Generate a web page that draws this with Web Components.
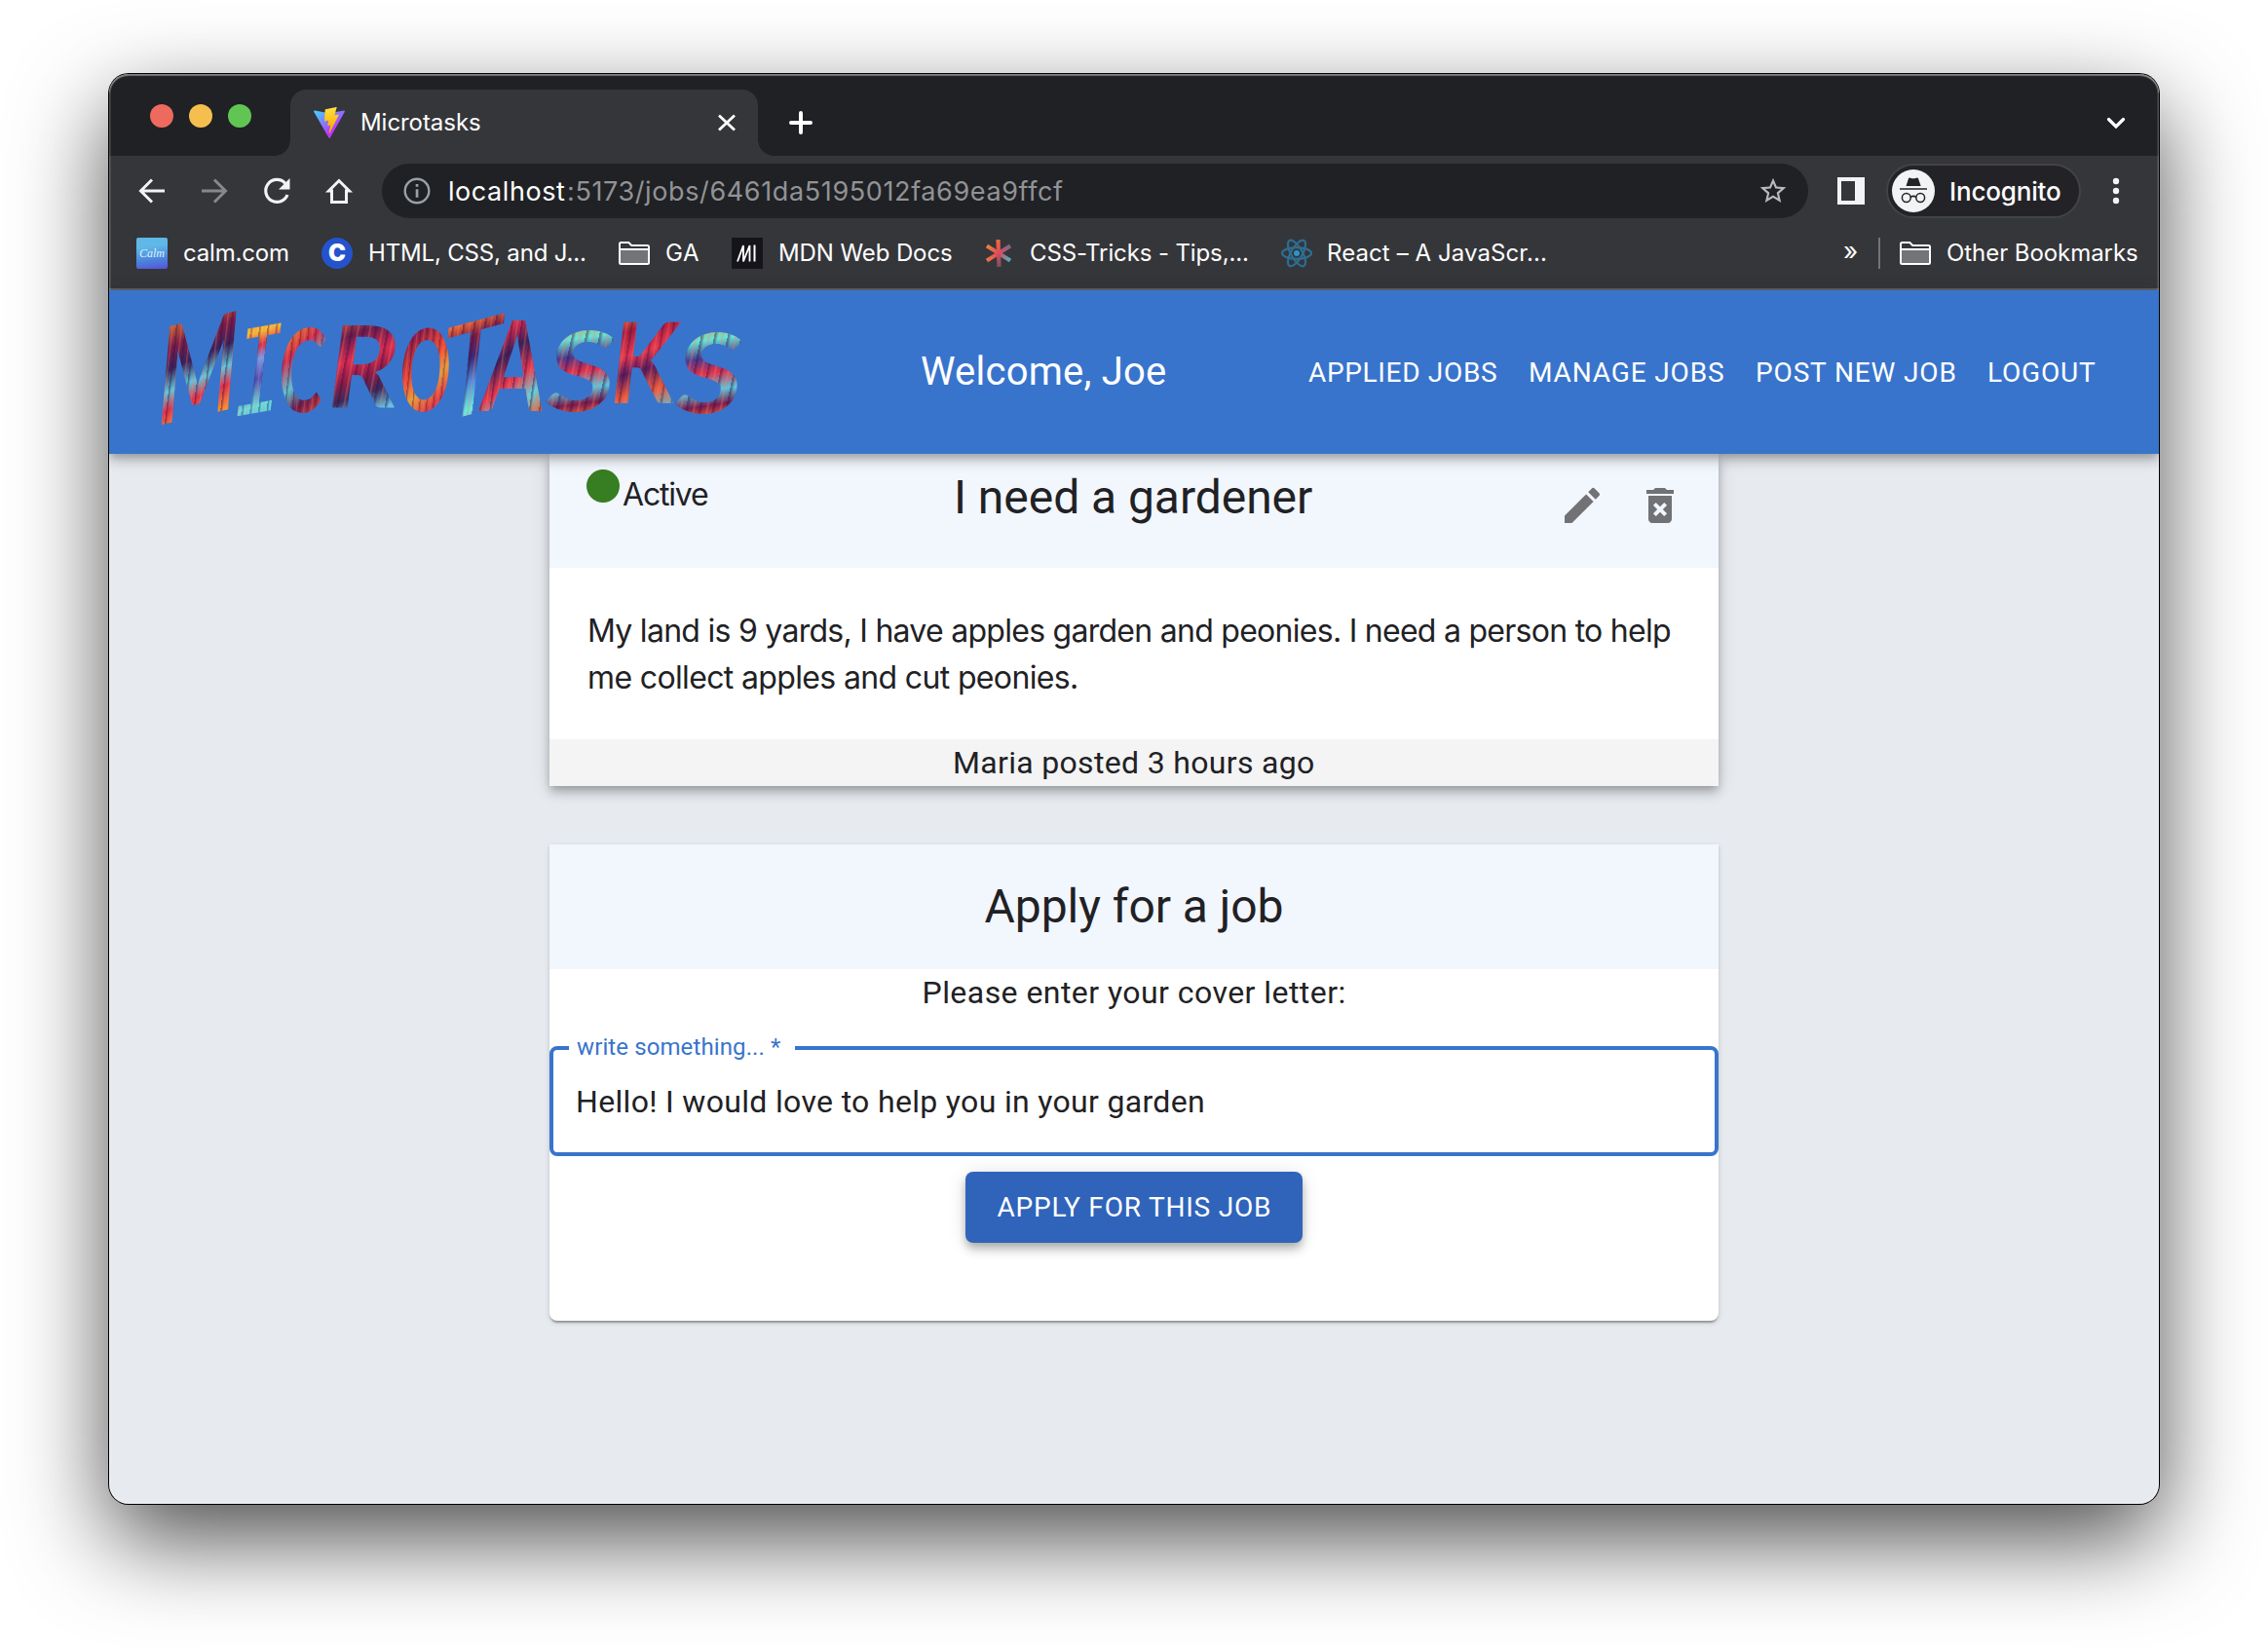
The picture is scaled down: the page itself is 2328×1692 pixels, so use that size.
<!DOCTYPE html>
<html lang="en">
<head>
<meta charset="utf-8">
<title>Microtasks</title>
<style>
  html, body { margin: 0; background: #fff; }
  body { width: 2328px; height: 1692px; overflow: hidden; font-family: Roboto, "Liberation Sans", sans-serif; }
</style>
</head>
<body>
<browser-window>
  <tab-strip slot="chrome"></tab-strip>
  <nav-toolbar slot="chrome"></nav-toolbar>
  <bookmarks-bar slot="chrome"></bookmarks-bar>
  <app-header></app-header>
  <job-page></job-page>
</browser-window>

<script>
const define = (name, html, setup) => {
  const template = document.createElement('template');
  template.innerHTML = html;
  customElements.define(name, class extends HTMLElement {
    constructor() {
      super();
      this.attachShadow({ mode: 'open' }).append(template.content.cloneNode(true));
    }
    connectedCallback() { if (setup) setup(this, this.shadowRoot); }
  });
};

const ctx = document.createElement('canvas').getContext('2d');
const inkOf = (el, text) => {
  const s = getComputedStyle(el);
  ctx.font = `${s.fontStyle} ${s.fontWeight} ${s.fontSize} ${s.fontFamily}`;
  return ctx.measureText(text);
};

/* A line of text tracked so that its ink fills the width "w". */
define('fit-text', `
  <style>
    :host { display: block; flex: none; white-space: nowrap; }
    span { display: inline-block; }
  </style><span><slot></slot></span>`, (host, root) => {
  const text = host.textContent, w = +host.getAttribute('w');
  const m = inkOf(host, text);
  const ink = m.actualBoundingBoxRight + m.actualBoundingBoxLeft;
  const span = root.querySelector('span');
  host.style.width = w + 'px';
  span.style.letterSpacing = (w - ink) / (text.length - 1) + 'px';
  span.style.marginLeft = m.actualBoundingBoxLeft + 'px';
});

/* One painted letter of the wordmark, stretched to w by h. */
define('brush-letter', `
  <style>
    :host { display: block; flex: none; font: italic 700 100px/120px Lato, "Liberation Sans", sans-serif; }
    span {
      display: block; width: max-content; padding: 0 16px; color: transparent;
      transform-origin: 0 0;
      background:
        repeating-linear-gradient(100deg, rgba(60,14,60,.42) 0 1px, rgba(60,14,60,0) 3px 5px, rgba(255,130,90,.35) 6px, rgba(255,120,90,0) 8px 10px),
        var(--paint);
      -webkit-background-clip: text; background-clip: text;
    }
  </style><span><slot></slot></span>`, (host, root) => {
  const w = +host.getAttribute('w'), h = +host.getAttribute('h');
  const m = inkOf(host, host.textContent);
  const sx = w / (m.actualBoundingBoxLeft + m.actualBoundingBoxRight);
  const sy = h / (m.actualBoundingBoxAscent + m.actualBoundingBoxDescent);
  const base = 60 + (m.fontBoundingBoxAscent - m.fontBoundingBoxDescent) / 2;
  const dx = -(16 - m.actualBoundingBoxLeft) * sx;
  const dy = -(base - m.actualBoundingBoxAscent) * sy;
  host.style.width = w + 'px';
  host.style.height = h + 'px';
  root.querySelector('span').style.transform = `translate(${dx}px,${dy}px) scale(${sx},${sy})`;
});

define('browser-window', `
  <style>
    :host {
      display: flex; flex-direction: column; position: relative; width: 2104px; height: 1468px;
      margin: 76px 112px; border-radius: 20px; background: #e7eaef;
      box-shadow: 0 0 0 1px #000, 0 36px 96px rgba(0,0,0,.7);
    }
    .frame { display: flex; flex-direction: column; height: 100%; border-radius: 20px; overflow: hidden; }
    .chrome { border-bottom: 2px solid #5f6063; font-family: Inter, "Liberation Sans", sans-serif; }
    .page { display: flex; flex-direction: column; flex: 1; }
    :host::after {
      content: ""; position: absolute; inset: 0; border-radius: 20px; pointer-events: none;
      box-shadow: inset 0 2px 1px rgba(255,255,255,.3), inset 0 0 0 1.5px rgba(255,255,255,.2);
    }
  </style>
  <div class="frame">
    <div class="chrome"><slot name="chrome"></slot></div>
    <div class="page"><slot></slot></div>
  </div>`);

define('tab-strip', `
  <style>
    :host { display: flex; height: 84px; background: #202124; color: #fff; font-size: 24px; line-height: 30px; }
    .lights { display: flex; gap: 16px; margin: 31px 40px 0 42px; }
    .lights i { width: 24px; height: 24px; border-radius: 50%; background: #ed6a5e; }
    .lights i:nth-child(2) { background: #f5bf4f; }
    .lights i:nth-child(3) { background: #61c554; }
    .tab {
      position: relative; display: flex; align-items: center; box-sizing: border-box;
      width: 480px; height: 68px; margin-top: 16px; padding: 0 22px 0 24px;
      border-radius: 16px 16px 0 0; background: #35363a;
    }
    .tab::before, .tab::after { content: ""; position: absolute; bottom: 0; width: 16px; height: 16px; }
    .tab::before { left: -16px; background: radial-gradient(circle at 0 0, #202124 15.5px, #35363a 16px); }
    .tab::after { right: -16px; background: radial-gradient(circle at 100% 0, #202124 15.5px, #35363a 16px); }
    .tab fit-text { margin: 0 auto 0 18px; }
    svg { display: block; flex: none; }
    .plus { margin: 38px auto 0 32px; }
    .more { margin: 38px 32px 0 0; }
  </style>
  <div class="lights"><i></i><i></i><i></i></div>
  <div class="tab">
    <svg width="32" height="32" viewBox="0 0 256 257">
      <defs>
        <linearGradient id="a" x1="-.8%" x2="57.6%" y1="7.7%" y2="78.4%"><stop offset="0" stop-color="#41d1ff"/><stop offset="1" stop-color="#bd34fe"/></linearGradient>
        <linearGradient id="b" x1="43.4%" x2="50.3%" y1="2.2%" y2="89%"><stop offset="0" stop-color="#ffea83"/><stop offset=".08" stop-color="#ffdd35"/><stop offset="1" stop-color="#ffa800"/></linearGradient>
      </defs>
      <path fill="url(#a)" d="M255.153 37.938L134.897 252.976c-2.483 4.44-8.862 4.466-11.382.048L.875 37.958c-2.746-4.814 1.371-10.646 6.827-9.67l120.385 21.517a6.537 6.537 0 0 0 2.322-.004l117.867-21.483c5.438-.991 9.574 4.796 6.877 9.62Z"/>
      <path fill="url(#b)" d="M185.432.063L96.44 17.501a3.268 3.268 0 0 0-2.634 3.014l-5.474 92.456a3.268 3.268 0 0 0 3.997 3.378l24.777-5.718c2.318-.535 4.413 1.507 3.936 3.838l-7.361 36.047c-.495 2.426 1.782 4.5 4.151 3.78l15.304-4.649c2.372-.72 4.652 1.36 4.15 3.788l-11.698 56.621c-.732 3.542 3.979 5.473 5.943 2.437l1.313-2.028l72.516-144.72c1.215-2.423-.88-5.186-3.54-4.672l-25.505 4.922c-2.396.462-4.435-1.77-3.759-4.114l16.646-57.705c.677-2.35-1.37-4.583-3.769-4.113Z"/>
    </svg>
    <fit-text w="121">Microtasks</fit-text>
    <svg width="20" height="20" viewBox="0 0 20 20" stroke="#fff" stroke-width="2.8"><path d="M2 2.500 18 17.500M18 2.500 2 17.500"/></svg>
  </div>
  <svg class="plus" width="24" height="24" viewBox="0 0 24 24" stroke="#fff" stroke-width="4" stroke-linecap="round"><path d="M12 2v20M2 12h20"/></svg>
  <svg class="more" width="24" height="24" viewBox="0 0 24 24" fill="none" stroke="#fff" stroke-width="3.200" stroke-linecap="round"><path d="M4.500 8.500 12 16l7.500-7.500"/></svg>`);

define('nav-toolbar', `
  <style>
    :host { display: flex; align-items: center; height: 72px; background: #35363a; color: #fff; }
    svg { display: block; flex: none; }
    .buttons { display: flex; gap: 32px; margin-left: 28px; }
    .url {
      display: flex; align-items: center; box-sizing: border-box; width: 1464px; height: 56px;
      margin-left: 28px; padding: 0 20px 0 21px; border-radius: 28px; background: #202124; font-size: 27px; color: #9aa0a6;
    }
    .url .host { margin-left: 19px; color: #fff; }
    .url .path { margin: 0 auto 0 4px; color: #919397; }
    .side { margin: 0 22px 0 30px; }
    .incognito {
      display: flex; align-items: center; box-sizing: border-box; width: 200px; height: 56px; padding: 0 18px 0 4px;
      border: 2px solid #424347; border-radius: 28px; background: #232327; font-size: 26px; font-weight: 500;
    }
    .incognito fit-text { margin-left: 17px; }
    .dots { margin-left: 32px; }
  </style>
  <div class="buttons">
    <svg width="32" height="32" viewBox="0 0 32 32" fill="none" stroke="#f1f3f4" stroke-width="3"><path d="M29 16H5M16 4.500 4.500 16 16 27.500"/></svg>
    <svg width="32" height="32" viewBox="0 0 32 32" fill="none" stroke="#87888b" stroke-width="3"><path d="M3 16h24M16 4.500 27.500 16 16 27.500"/></svg>
    <svg width="32" height="32" viewBox="0 0 32 32"><path d="M24.800 8.200A11.500 11.500 0 1 0 27 20" fill="none" stroke="#f1f3f4" stroke-width="3.200"/><path d="M29.500 3v11.500H18Z" fill="#f1f3f4"/></svg>
    <svg width="32" height="32" viewBox="0 0 32 32"><path d="M16 5.500 5.500 16h3v11.400h15V16h3Z" fill="none" stroke="#f1f3f4" stroke-width="3"/></svg>
  </div>
  <div class="url">
    <svg width="30" height="30" viewBox="0 0 30 30"><circle cx="15" cy="15" r="12.300" fill="none" stroke="#9aa0a6" stroke-width="2.400"/><path d="M13.700 8h2.700v2.800h-2.700zM13.700 13.200h2.700v8.600h-2.700z" fill="#9aa0a6"/></svg>
    <fit-text class="host" w="118">localhost</fit-text><fit-text class="path" w="507">:5173/jobs/6461da5195012fa69ea9ffcf</fit-text>
    <svg width="32" height="32" viewBox="0 0 24 24" fill="#b9babd"><path d="m22 9.240-7.190-.62L12 2 9.190 8.630 2 9.240l5.460 4.730L5.820 21 12 17.270 18.180 21l-1.630-7.030L22 9.240zM12 15.400l-3.760 2.270 1-4.280-3.320-2.880 4.380-.38L12 6.100l1.710 4.040 4.380.38-3.320 2.880 1 4.280L12 15.400z"/></svg>
  </div>
  <svg class="side" width="28" height="28" viewBox="0 0 28 28"><path fill="#f1f3f4" fill-rule="evenodd" d="M0 0h28v28H0zM4 4v20h14V4z"/></svg>
  <div class="incognito">
    <svg width="44" height="44" viewBox="0 0 44 44"><circle cx="22" cy="22" r="22" fill="#f1f3f4"/><path d="M14.500 17 17 9.300c.4-1 1.300-.9 2-.6 1.800.8 4 .8 6 0 .8-.4 1.600-.3 2 .6L29.700 17Z" fill="#232327"/><path d="M8 20h28M19 28.500c2-1.500 4-1.500 6 0" stroke="#232327" stroke-width="1.600" fill="none"/><circle cx="14.800" cy="29" r="4.400" fill="none" stroke="#232327" stroke-width="1.500"/><circle cx="29.200" cy="29" r="4.400" fill="none" stroke="#232327" stroke-width="1.500"/></svg>
    <fit-text w="112">Incognito</fit-text>
  </div>
  <svg class="dots" width="8" height="28" viewBox="0 0 8 28" fill="#f1f3f4"><circle cx="4" cy="4" r="3.200"/><circle cx="4" cy="14" r="3.200"/><circle cx="4" cy="24" r="3.200"/></svg>`);

define('folder-icon', `
  <style>:host { display: block; flex: none; } svg { display: block; }</style>
  <svg width="32" height="32" viewBox="0 0 32 32"><path d="M1 6.500Q1 5 2.500 5h7.800l3 3h16.200Q31 8 31 9.500v16q0 1.500-1.500 1.500h-27Q1 27 1 25.500Z" fill="#35363a" stroke="#fff" stroke-width="2"/><path d="M2 12.500h28V26H2z" fill="#737477"/><path d="M1 12h30" stroke="#fff" stroke-width="2"/></svg>`);

define('bookmarks-bar', `
  <style>
    :host { display: flex; align-items: center; height: 56px; padding: 0 22px 8px 28px; background: #35363a; color: #fff; font-size: 24px; line-height: 30px; }
    a { display: flex; align-items: center; gap: 17px; margin-right: 34px; }
    svg { display: block; flex: none; }
    .calm { display: flex; align-items: center; justify-content: center; width: 32px; height: 32px; border-radius: 2px; background: linear-gradient(172deg, #5fb8e8 30%, #4a80dc 72%, #5a4fdc); font: italic 12px "Liberation Serif", serif; color: #dff1fb; }
    .c { display: flex; align-items: center; justify-content: center; width: 32px; height: 32px; border-radius: 50%; background: #2453cd; font-weight: 900; font-size: 24px; }
    .over { margin-left: auto; margin-right: 22px; font-size: 26px; margin-top: -4px; }
    .rule { width: 2px; height: 32px; margin-right: 20px; background: #737477; }
    .last { margin-right: 0; }
  </style>
  <a><span class="calm">Calm</span><fit-text w="107">calm.com</fit-text></a>
  <a style="gap:18px"><span class="c">C</span><fit-text w="221">HTML, CSS, and J...</fit-text></a>
  <a><folder-icon></folder-icon><fit-text w="33">GA</fit-text></a>
  <a style="gap:18px;margin-right:32px"><svg width="32" height="32" viewBox="0 0 32 32"><path fill="#15141a" d="M0 0h32v32H0z"/><path d="M6 24.500 12 8v16.500L18.500 8v16.500" fill="none" stroke="#fff" stroke-width="1.800"/><path d="M23.500 7.500v17" stroke="#fff" stroke-width="2"/></svg><fit-text w="176">MDN Web Docs</fit-text></a>
  <a><svg width="32" height="32" viewBox="0 0 32 32" fill="none" stroke-width="4.200"><defs><linearGradient id="t" gradientUnits="userSpaceOnUse" x1="14" y1="2" x2="18" y2="30"><stop offset="0" stop-color="#ef6a3a"/><stop offset=".5" stop-color="#dd4b5c"/><stop offset="1" stop-color="#6f5360"/></linearGradient><linearGradient id="u" gradientUnits="userSpaceOnUse" x1="4" y1="9" x2="28" y2="23"><stop offset="0" stop-color="#f08434"/><stop offset=".5" stop-color="#de4a60"/><stop offset="1" stop-color="#4bb0b4"/></linearGradient><linearGradient id="v" gradientUnits="userSpaceOnUse" x1="4" y1="23" x2="28" y2="9"><stop offset="0" stop-color="#f0743a"/><stop offset=".5" stop-color="#de4a60"/><stop offset="1" stop-color="#7b6a86"/></linearGradient></defs><path stroke="url(#u)" d="m4 8.500 24 15"/><path stroke="url(#v)" d="m4 23.500 24-15"/><path stroke="url(#t)" d="M15.500 2l1 28"/></svg><fit-text w="223">CSS-Tricks - Tips,...</fit-text></a>
  <a><svg width="32" height="32" viewBox="0 0 32 32" fill="none" stroke="#2d6e92" stroke-width="2.200"><ellipse cx="16" cy="16" rx="15" ry="5.800"/><ellipse cx="16" cy="16" rx="15" ry="5.800" transform="rotate(60 16 16)"/><ellipse cx="16" cy="16" rx="15" ry="5.800" transform="rotate(120 16 16)"/><circle cx="16" cy="16" r="3" fill="#3191c4" stroke="none"/></svg><fit-text w="223">React – A JavaScr...</fit-text></a>
  <fit-text class="over" w="13">»</fit-text>
  <span class="rule"></span>
  <a class="last"><folder-icon></folder-icon><fit-text w="195">Other Bookmarks</fit-text></a>`);

define('micro-logo', `
  <style>:host { display: flex; align-items: flex-start; }</style>
  <brush-letter w="78" h="100" style="margin-top:5px;transform:skewY(-13deg);--paint:linear-gradient(172deg,#f08a2c 16%,#7a1c4a 34%,#3a225c 46%,#5fc8dc 58%,#e0304c 68%,#f79a2e 82%)">M</brush-letter>
  <brush-letter w="46" h="88" style="margin:14px 0 0 0;font-family:Liberation Mono;font-weight:400;transform:skewY(-10deg);--paint:linear-gradient(175deg,#f7b93c 22%,#d6304e 30%,#6f9df0 38%,#4f50b8 50%,#68e0e4 66%,#4fc4e0 76%,#c8284e)">I</brush-letter>
  <brush-letter w="46" h="88" style="margin:14px 0 0 0;--paint:linear-gradient(150deg,#8b1d4a 10%,#f08a2c 26%,#d12c4f 40%,#54c6dc 56%,#6b1d4e 68%,#ee4a3c 82%)">C</brush-letter>
  <brush-letter w="66" h="84" style="margin:12px 0 0 5px;--paint:linear-gradient(160deg,#ef6a34 15%,#6a1c50 32%,#d92c52 46%,#8a1c4a 58%,#3a2a5c 68%,#62c8ec 80%)">R</brush-letter>
  <brush-letter w="48" h="86" style="margin:15px 0 0 7px;--paint:linear-gradient(150deg,#d82c50 15%,#8a1c4a 30%,#ee4838 48%,#e8a03c 60%,#e23c48 72%,#58c8dc)">O</brush-letter>
  <brush-letter w="60" h="94" style="margin:8px 0 0 -2px;font-weight:400;transform:skewY(-15deg);--paint:linear-gradient(172deg,#f8d23c 16%,#ee6a34 24%,#7a1c4c 34%,#3a2a78 46%,#4a8ce0 60%,#6ce8dc 76%,#9a70d0)">T</brush-letter>
  <brush-letter w="66" h="92" style="margin:8px 0 0 -28px;--paint:linear-gradient(150deg,#f0a03c 18%,#c82850 34%,#3a225c 44%,#e83850 58%,#5ed4e0 70%,#ee5a34 82%)">A</brush-letter>
  <brush-letter w="72" h="84" style="margin:17px 0 0 2px;--paint:linear-gradient(170deg,#e0a048 16%,#66e4d8 30%,#4a3a90 42%,#e0304e 52%,#58c8e0 64%,#7a1c50 74%,#f05a34 82%)">S</brush-letter>
  <brush-letter w="70" h="84" style="margin:8px 0 0 -1px;--paint:linear-gradient(165deg,#f08a2c 16%,#a81c40 30%,#e83850 45%,#5a1c60 56%,#ee5a3c 70%,#50c0dc 84%)">K</brush-letter>
  <brush-letter w="70" h="84" style="margin:19px 0 0 -8px;--paint:linear-gradient(170deg,#e0a048 16%,#66e4d8 30%,#4a3a90 42%,#e0304e 52%,#58c8e0 64%,#7a1c50 74%,#f05a34 82%)">S</brush-letter>`);

define('app-header', `
  <style>
    :host {
      display: flex; align-items: center; flex: none; position: relative; z-index: 1; height: 168px; background: #3874cc; color: #fff;
      box-shadow: 0 4px 8px -2px rgba(0,0,0,.2), 0 8px 10px rgba(0,0,0,.14), 0 2px 20px rgba(0,0,0,.12);
    }
    micro-logo { width: 595px; height: 120px; margin-left: 53px; }
    .hello { margin: 0 0 0 186px; font-size: 40px; line-height: 64px; }
    nav { display: flex; gap: 35px; margin: 0 65px 0 auto; font-size: 28px; line-height: 49px; }
  </style>
  <micro-logo></micro-logo>
  <fit-text class="hello" w="250">Welcome, Joe</fit-text>
  <nav>
    <fit-text w="193">APPLIED JOBS</fit-text>
    <fit-text w="198">MANAGE JOBS</fit-text>
    <fit-text w="203">POST NEW JOB</fit-text>
    <fit-text w="109">LOGOUT</fit-text>
  </nav>`);

define('job-page', `
  <style>
    :host { display: flex; flex-direction: column; align-items: center; color: #212124; font-size: 32px; line-height: 48px; }
    :host > * { width: 1200px; }
  </style>
  <job-card></job-card>
  <apply-card></apply-card>`);

define('job-card', `
  <style>
    :host { display: block; background: #fff; box-shadow: 0 4px 8px -2px rgba(0,0,0,.2), 0 8px 10px rgba(0,0,0,.14), 0 2px 20px rgba(0,0,0,.12); }
    header { display: flex; height: 117px; background: #f2f6fd; }
    .dot { width: 34px; height: 34px; margin: 16px 4px 0 38px; border-radius: 50%; background: #377e22; }
    .sys { font-family: Inter, "Liberation Sans", sans-serif; }
    .state { margin: 18px 0 0 -1px; }
    h5 { margin: 13px 0 0 256px; font-weight: 400; font-size: 48px; line-height: 64px; }
    .actions { display: flex; gap: 32px; margin: 29px 36px 0 auto; }
    svg { display: block; fill: #717275; }
    .body { height: 135px; padding: 41px 41px 0; }
    footer { display: flex; justify-content: center; background: #f4f4f4; }
  </style>
  <header>
    <span class="dot"></span>
    <fit-text class="sys state" w="88">Active</fit-text>
    <h5><fit-text w="364">I need a gardener</fit-text></h5>
    <div class="actions">
      <svg width="48" height="48" viewBox="0 0 24 24"><path d="M3 17.250V21h3.750L17.810 9.940l-3.750-3.750L3 17.250zM20.710 7.040c.39-.39.39-1.020 0-1.410l-2.340-2.340a.9959.9959 0 0 0-1.410 0l-1.830 1.830 3.750 3.750 1.830-1.830z"/></svg>
      <svg width="48" height="48" viewBox="0 0 24 24"><path d="M6 19c0 1.100.9 2 2 2h8c1.100 0 2-.9 2-2V7H6v12zm2.460-7.120l1.410-1.410L12 12.590l2.120-2.120 1.410 1.410L13.410 14l2.120 2.120-1.410 1.410L12 15.410l-2.120 2.120-1.410-1.410L10.590 14l-2.130-2.120zM15.500 4l-1-1h-5l-1 1H5v2h14V4z"/></svg>
    </div>
  </header>
  <div class="body sys">
    <fit-text w="1109">My land is 9 yards, I have apples garden and peonies. I need a person to help</fit-text>
    <fit-text w="500">me collect apples and cut peonies.</fit-text>
  </div>
  <footer><fit-text w="368">Maria posted 3 hours ago</fit-text></footer>`);

define('outlined-field', `
  <style>
    :host { display: block; position: relative; box-sizing: border-box; height: 113px; padding: 29px 25px 0; border: 4px solid #3874cc; border-radius: 8px; }
    label { position: absolute; left: 16px; top: -20px; box-sizing: border-box; width: 232px; padding: 0 8px; background: #fff; color: #3874cc; font-size: 24px; line-height: 34px; }
  </style>
  <label><fit-text w="210">write something... *</fit-text></label>
  <slot></slot>`);

define('apply-card', `
  <style>
    :host { display: flex; flex-direction: column; align-items: center; height: 489px; margin-top: 60px; border-radius: 0 0 8px 8px; background: #fff; box-shadow: 0 4px 2px -2px rgba(0,0,0,.2), 0 2px 2px rgba(0,0,0,.14), 0 2px 6px rgba(0,0,0,.12); }
    header { display: flex; align-items: center; justify-content: center; align-self: stretch; box-sizing: border-box; height: 128px; padding-right: 2px; background: #f2f6fd; font-size: 48px; line-height: 64px; }
    outlined-field { align-self: stretch; margin: 31px 0 16px; }
    button {
      display: flex; align-items: center; justify-content: center; width: 346px; height: 73px; padding: 0 1px 0 0; border: 0; border-radius: 8px;
      background: #2f64ba; color: #fff; font: 28px/49px Roboto, sans-serif;
      box-shadow: 0 4px 8px -2px rgba(0,0,0,.2), 0 8px 10px rgba(0,0,0,.14), 0 2px 20px rgba(0,0,0,.12);
    }
  </style>
  <header><fit-text w="305">Apply for a job</fit-text></header>
  <fit-text w="431">Please enter your cover letter:</fit-text>
  <outlined-field><fit-text w="642">Hello! I would love to help you in your garden</fit-text></outlined-field>
  <button><fit-text w="280">APPLY FOR THIS JOB</fit-text></button>`);
</script>
</body>
</html>
